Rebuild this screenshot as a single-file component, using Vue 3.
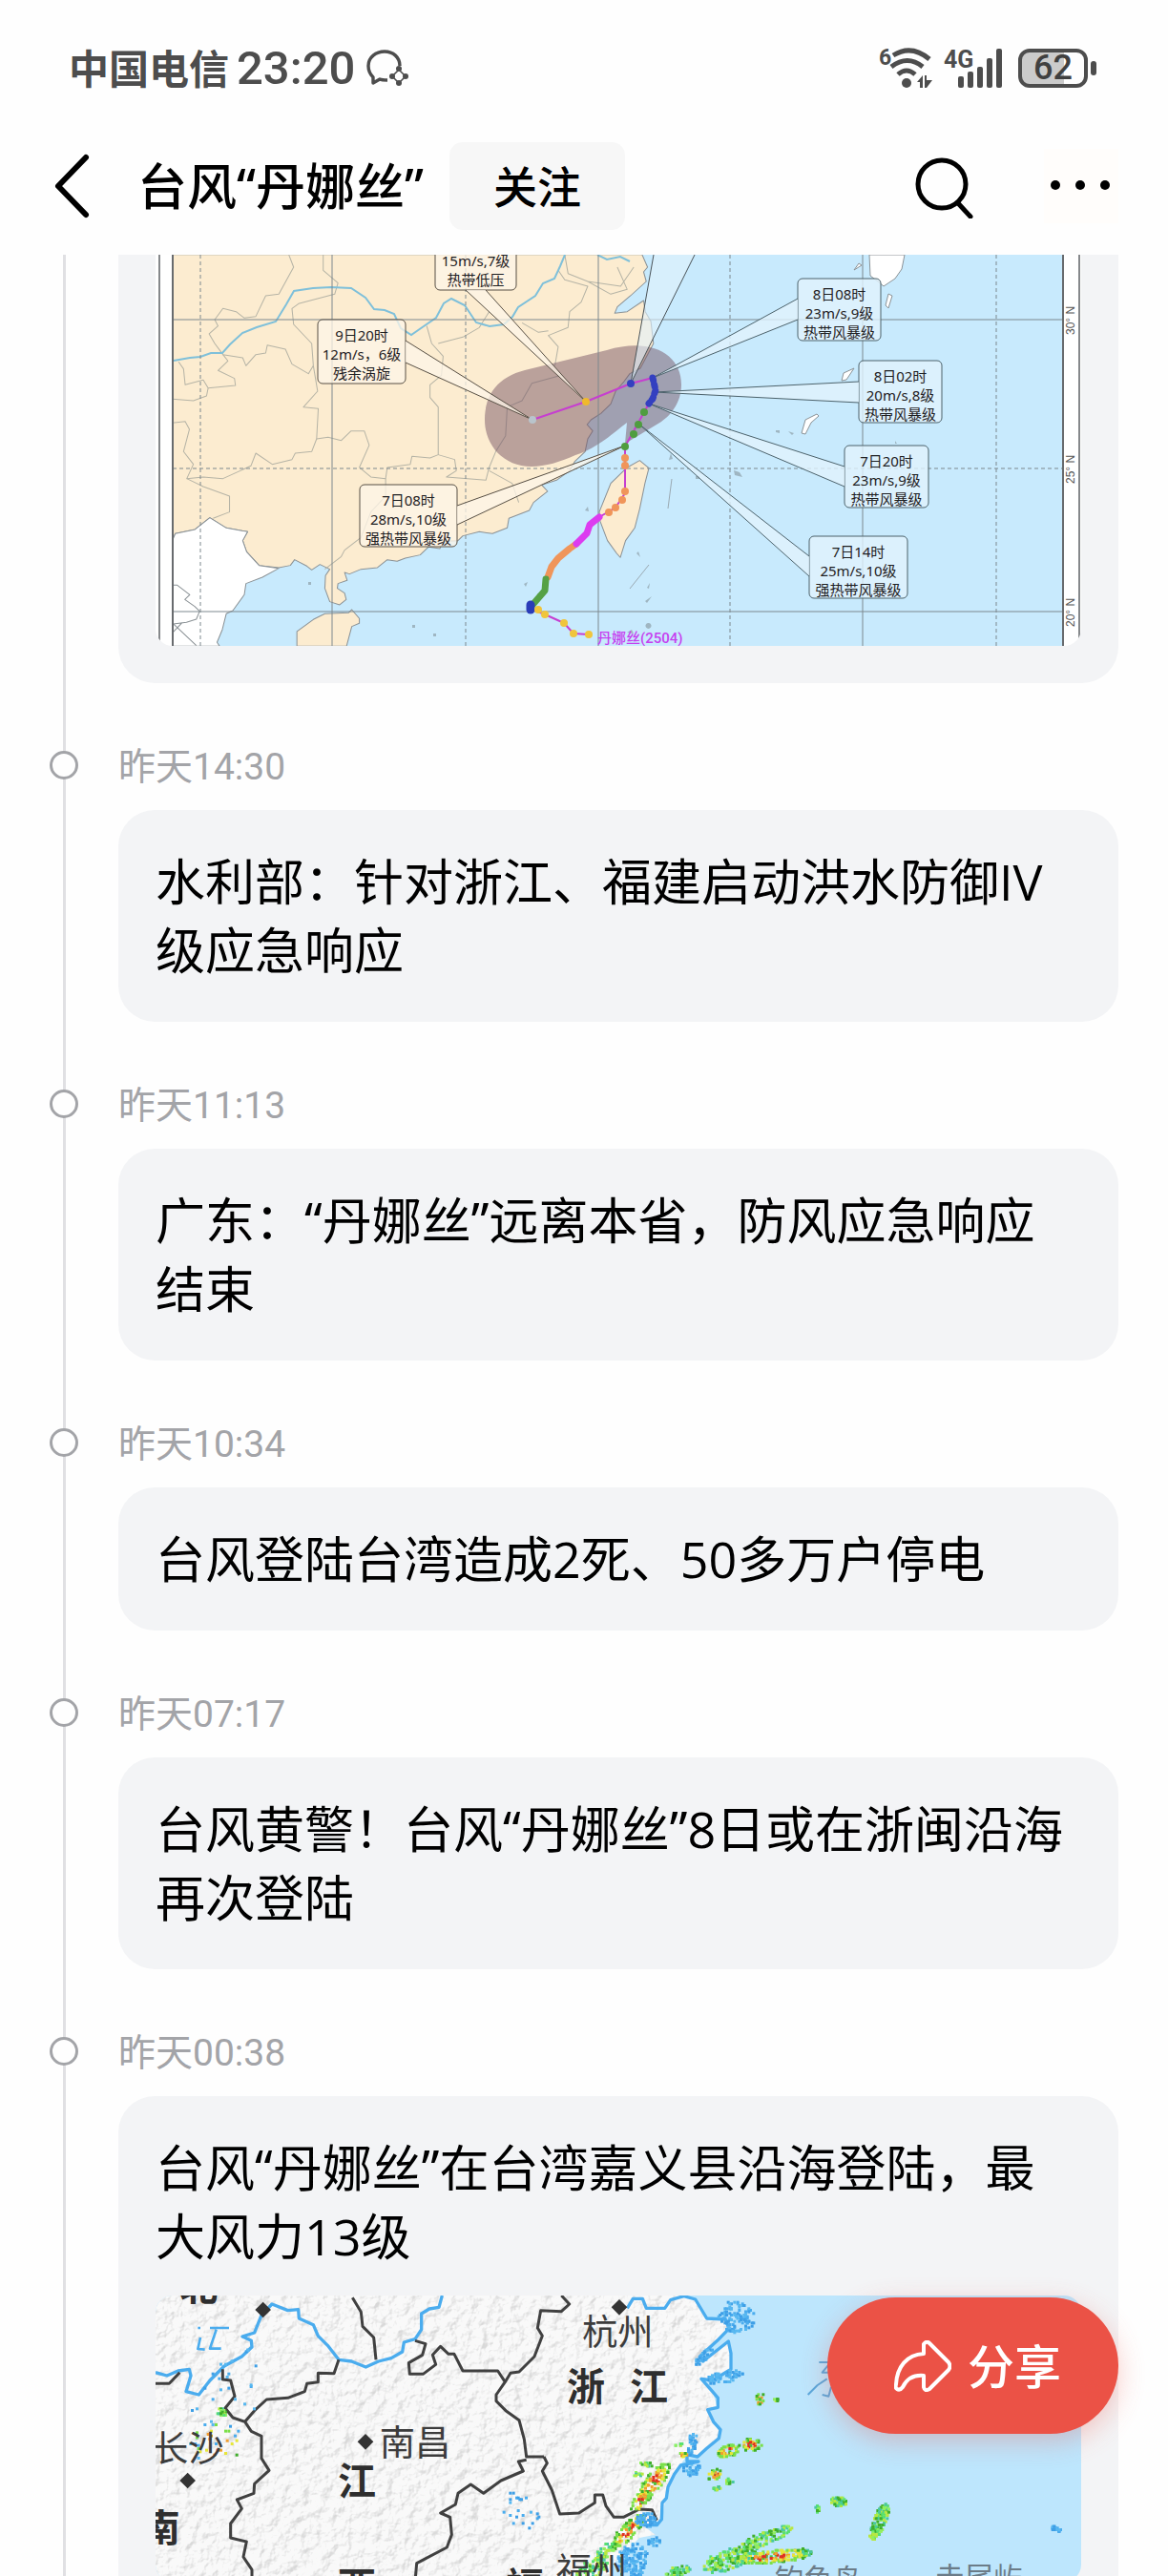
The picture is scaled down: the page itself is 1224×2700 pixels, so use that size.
<script setup>
import { ref } from 'vue'

const followed = ref(false)

const entries = [
  { time: '昨天14:30', title: '水利部：针对浙江、福建启动洪水防御IV级应急响应' },
  { time: '昨天11:13', title: '广东：“丹娜丝”远离本省，防风应急响应结束' },
  { time: '昨天10:34', title: '台风登陆台湾造成2死、50多万户停电' },
  { time: '昨天07:17', title: '台风黄警！台风“丹娜丝”8日或在浙闽沿海再次登陆' },
  {
    time: '昨天00:38',
    title: '台风“丹娜丝”在台湾嘉义县沿海登陆，最大风力13级',
    radar: true,
  },
]

// curly quotes are set in their own face
const splitQuotes = (text) => {
  return text.split(/([“”])/).filter(Boolean)
}

const isQuote = (part) => {
  return part === '“' || part === '”'
}

// forecast bubbles on the track map
const callouts = [
  { x: 293, y: -30, w: 85, h: 67, lines: ['', '15m/s,7级', '热带低压'], leader: '325,37 451,154 346,37', land: true },
  { x: 170, y: 68, w: 92, h: 67, lines: ['9日20时', '12m/s，6级', '残余涡旋'], leader: '262,90 395,173 262,113', land: true },
  { x: 214, y: 241, w: 102, h: 65, lines: ['7日08时', '28m/s,10级', '强热带风暴级'], leader: '316,263 492,200 316,283', land: true },
  { x: 673, y: 25, w: 87, h: 65, lines: ['8日08时', '23m/s,9级', '热带风暴级'], leader: '673,46 521,129 673,68' },
  { x: 737, y: 111, w: 87, h: 65, lines: ['8日02时', '20m/s,8级', '热带风暴级'], leader: '737,133 523,144 737,155' },
  { x: 722, y: 200, w: 88, h: 65, lines: ['7日20时', '23m/s,9级', '热带风暴级'], leader: '722,222 517,156 722,243' },
  { x: 685, y: 295, w: 103, h: 65, lines: ['7日14时', '25m/s,10级', '强热带风暴级'], leader: '685,316 506,177 685,337' },
]

const trackDots = [
  { x: 395, y: 173, c: '#b9c4cc' },
  { x: 451, y: 154, c: '#efb92c' },
  { x: 498, y: 135, c: '#3340c0' },
  { x: 512, y: 165, c: '#4f9d3f' },
  { x: 506, y: 178, c: '#4f9d3f' },
  { x: 501, y: 188, c: '#4f9d3f' },
  { x: 492, y: 201, c: '#4f9d3f' },
  { x: 492, y: 213, c: '#f0955a' },
  { x: 492, y: 221, c: '#f0955a' },
  { x: 492, y: 248, c: '#f0955a' },
  { x: 489, y: 257, c: '#f0955a' },
  { x: 482, y: 265, c: '#f0955a' },
  { x: 475, y: 270, c: '#f0955a' },
  { x: 401, y: 372, c: '#f0c53c' },
  { x: 408, y: 377, c: '#f0c53c' },
  { x: 428, y: 386, c: '#f0c53c' },
  { x: 438, y: 397, c: '#f0c53c' },
  { x: 454, y: 398, c: '#f0c53c' },
]

// radar echoes: centre, half length, half width, angle, density, palette
const hot = ['#3fae2a', '#7be04a', '#e6e63a', '#f0a030', '#e03020', '#48c840']
const green = ['#58e070', '#3fae2a', '#8ff060', '#b8e840', '#48c8a0']
const blue = ['#4aacee', '#58b8f0', '#3e9fe6']
const echoes = [
  [1692, 660, 75, 26, -52, 110, hot],
  [1650, 720, 40, 20, -50, 40, hot],
  [1610, 815, 75, 22, -48, 90, hot],
  [1540, 880, 45, 18, -48, 40, green],
  [1495, 935, 55, 26, -30, 90, green],
  [1925, 562, 34, 20, -20, 50, hot],
  [1995, 543, 36, 18, 0, 40, hot],
  [1885, 637, 24, 16, -20, 26, hot],
  [1925, 660, 14, 8, 0, 12, green],
  [1890, 678, 12, 8, 0, 10, green],
  [2025, 400, 14, 16, 0, 14, hot],
  [2077, 403, 8, 6, 0, 6, green],
  [2035, 840, 100, 20, -22, 120, green],
  [2060, 895, 130, 20, -5, 170, hot],
  [1925, 905, 85, 32, -18, 150, green],
  [1765, 945, 50, 18, -20, 60, green],
  [2400, 785, 60, 20, -68, 130, green],
  [2272, 722, 24, 16, 0, 40, green],
  [2207, 745, 9, 12, 0, 12, green],
  [2172, 880, 18, 10, 30, 12, green],
  [2957, 808, 16, 9, 20, 20, blue],
  [1640, 635, 16, 8, 0, 10, green],
  [1668, 605, 22, 8, 0, 12, green],
  [1770, 543, 12, 5, 0, 6, green],
  [1785, 576, 16, 8, 0, 12, hot],
  [1950, 140, 60, 50, 20, 110, blue],
  [1910, 330, 60, 18, -10, 60, blue],
  [1850, 262, 40, 12, -45, 26, blue],
  [1812, 540, 14, 34, 15, 34, blue],
  [1810, 620, 28, 20, 0, 34, blue],
  [1625, 910, 50, 55, 20, 130, blue],
  [1670, 780, 36, 22, 0, 54, blue],
  [1690, 850, 22, 16, 0, 20, blue],
  [345, 410, 200, 90, -60, 34, blue],
  [315, 540, 80, 60, 0, 20, hot],
  [335, 440, 14, 12, 0, 16, green],
  [1275, 745, 70, 60, 30, 22, blue],
]

const makeCells = () => {
  let seed = 7
  const rand = () => {
    seed = (seed * 16807) % 2147483647
    return seed / 2147483647
  }
  const cells = []

  echoes.forEach(([cx, cy, rx, ry, angle, count, palette]) => {
    const a = (angle * Math.PI) / 180
    for (let i = 0; i < count; i++) {
      const r = Math.sqrt(rand())
      const t = rand() * Math.PI * 2
      const u = Math.cos(t) * r * rx
      const v = Math.sin(t) * r * ry
      const pick = palette === hot
        ? Math.min(5, Math.floor((1 - r) * 5 + rand() * 1.5))
        : Math.floor(rand() * palette.length)
      cells.push({
        x: Math.round((cx + u * Math.cos(a) - v * Math.sin(a)) / 5) * 5,
        y: Math.round((cy + u * Math.sin(a) + v * Math.cos(a)) / 5) * 5,
        c: palette[pick],
      })
    }
  })

  return cells
}

const cells = makeCells()
</script>

<template>
  <div class="page">
    <header class="status">
      <span class="carrier">中国电信</span>
      <span class="clock">23:20</span>
      <svg class="chat" viewBox="0 0 44 38" aria-hidden="true">
        <g fill="none" stroke="#4d4d4d" stroke-width="3.4" stroke-linejoin="round">
          <path d="M35 17C35 8 28 2 19 2S2 8 2 17c0 5 2 9 5 12v6l7-4c2 1 6 1 8 1" />
          <path d="M34 21l7 7-7 7-7-7z" stroke-width="1.6" />
        </g>
        <g fill="#4d4d4d">
          <circle cx="34" cy="20" r="3" />
          <circle cx="41" cy="28" r="3" />
          <circle cx="34" cy="35" r="3" />
          <circle cx="27" cy="28" r="3" />
        </g>
      </svg>

      <div class="signals">
        <svg class="wifi" viewBox="0 0 58 44" aria-hidden="true">
          <text x="0" y="19" font-size="23" class="tiny">6</text>
          <g fill="none" stroke="#4d4d4d" stroke-width="5">
            <path d="M15 9Q34-3 53 13" />
            <path d="M13 21Q30 8 46 21" />
            <path d="M20 29Q29 21 38 29" />
          </g>
          <circle cx="29" cy="38" r="5" fill="#4d4d4d" />
          <path d="M40 37l6-7v13h-3v-6zM48 30h2v5h6l-6 8h-2z" fill="#4d4d4d" />
        </svg>
        <svg class="cell" viewBox="0 0 62 44" aria-hidden="true">
          <text x="0" y="22" font-size="25" class="tiny">4G</text>
          <g fill="#4d4d4d">
            <rect x="15" y="31" width="6" height="12" rx="2" />
            <rect x="25" y="26" width="6" height="17" rx="2" />
            <rect x="35" y="21" width="6" height="22" rx="2" />
            <rect x="45" y="12" width="6" height="31" rx="2" />
            <rect x="55" y="2" width="6" height="41" rx="2" />
          </g>
        </svg>
        <span class="battery"><b>62</b></span>
      </div>
    </header>

    <nav class="nav">
      <button type="button" class="back" aria-label="返回">
        <svg viewBox="0 0 48 72">
          <path d="M38 6L9 36l29 30" fill="none" stroke="#000" stroke-width="6" stroke-linecap="round" stroke-linejoin="round" />
        </svg>
      </button>
      <h1>台风<span class="quote">“</span>丹娜丝<span class="quote">”</span></h1>
      <button type="button" class="follow" @click="followed = !followed">
        {{ followed ? '已关注' : '关注' }}
      </button>
      <button type="button" class="search" aria-label="搜索">
        <svg viewBox="0 0 64 68">
          <g fill="none" stroke="#000" stroke-width="5" stroke-linecap="round">
            <circle cx="31" cy="32" r="25" />
            <path d="M48 52l13 14" />
          </g>
        </svg>
      </button>
      <button type="button" class="more" aria-label="更多">
        <svg viewBox="0 0 78 78">
          <circle cx="12" cy="38" r="5" />
          <circle cx="38" cy="38" r="5" />
          <circle cx="64" cy="38" r="5" />
        </svg>
      </button>
    </nav>

    <main class="feed">
      <section class="entry is-first">
        <div class="card">
          <svg class="map" viewBox="0 0 970 410" role="img" aria-label="台风路径图">
            <rect width="970" height="410" fill="#fff" />
            <rect x="18" width="933" height="410" fill="#c8eafd" />

            <!-- coastline, drawn on a finer sheet -->
            <g transform="translate(-43 -7) scale(.3444 .3333)" stroke="#8b9296" stroke-width="3" stroke-linejoin="round">
              <path
                fill="#fcecd0"
                d="M176 20H1605L1622 60L1610 75L1618 105L1570 150L1530 185L1522 205L1560 200L1610 165L1615 200L1632 230L1640 300L1600 378L1568 395L1550 420L1525 450L1510 490L1480 520L1450 540L1438 555L1455 575L1440 600L1432 640L1400 672L1385 700L1345 730L1300 745L1318 765L1275 800L1262 825L1200 850L1195 880L1150 898L1110 892L1060 905L1045 920L1000 922L990 945L955 940L930 965L885 975L860 985L830 980L800 1005L750 1010L715 1025L700 1020L708 1045L680 1055L678 1070L700 1085L705 1105L685 1122L655 1112L640 1070L642 1030L655 1010L625 995L600 1012L585 1000L548 980L535 998L500 1005L440 998L402 955L390 920L405 892L340 880L290 848L245 885L185 898L176 920Z"
              />
              <path
                fill="#fff"
                d="M176 920L185 898L245 885L290 848L340 880L405 892L390 920L402 955L440 998L500 1007L450 1035L400 1055L395 1090L360 1140L340 1150L328 1200L312 1240L320 1252H176Z"
              />
              <path fill="#fcecd0" d="M555 1252V1206L605 1168L640 1150L712 1147L722 1137L745 1165L745 1180L722 1190L706 1252Z" />
              <path fill="#fcecd0" d="M1598 668L1626 692L1614 740L1598 820L1583 880L1555 920L1539 973L1528 960L1500 920L1478 860L1475 830L1510 740L1560 690Z" />
              <path fill="none" d="M176 1060l15 0 38 30-15 15 30 22 15 15-10 25-30 10-40 5 70 68M176 1210l30-32" />
            </g>
            <g transform="translate(-43 -7) scale(.3444 .3333)" fill="none" stroke="#b6b4a6" stroke-width="3" stroke-linejoin="round">
              <path d="M530 20L545 60L500 145L460 150L430 215L395 220L370 200L330 190L305 225L315 245L288 270L305 300L330 335L390 345L400 370L430 335L460 330L465 305L520 318L540 365L590 395L605 370L600 300L545 240L540 190L560 175L670 145L680 110L635 70L635 20" />
              <path d="M330 335L345 355L315 385L365 410L368 432L285 440L280 465L240 480L176 475M285 440L270 415L215 430L210 380L195 358" />
              <path d="M605 370L618 450L575 500L620 505L615 600L600 640L550 645L540 665L480 680L430 645L415 685L330 725L270 720L220 725L240 680L210 640L228 570L215 545L176 550" />
              <path d="M950 245L965 300L1000 340L995 400L960 430L960 470L985 500L985 650L960 660L905 655L900 680L830 690L825 725L780 720L745 690L775 620L760 575L720 575L690 605L650 595L615 600" />
              <path d="M985 650L1035 665L1040 700L1010 720L1130 730L1140 690L1160 640L1190 590L1195 500L1240 480L1270 425L1360 400M1340 370L1350 310L1320 275L1380 250L1385 200L1420 170L1440 120L1370 100L1350 70" />
              <path d="M220 725L270 750L350 780L350 830L300 850M825 725L825 780L780 830L750 910L700 950L690 970L640 1010M1140 700L1210 740L1230 800" />
              <path d="M985 300L1060 280L1110 250L1140 200M1370 20L1380 80L1440 105L1510 145L1560 130L1530 60M1240 235L1290 265L1320 260M1440 105L1540 120L1580 60" />
            </g>
            <path
              fill="none"
              stroke="#7fc0da"
              stroke-width="2"
              d="M19 111L36 108L47 107L58 103L70 103L78 94L91 82L106 76L126 70L137 52L145 38L165 35L184 34L205 35L220 45L229 57L240 58L250 62L257 77L268 84L281 75L294 66L302 51L310 46L324 53L336 71L350 75L365 73L374 65L380 55L398 43L406 30L418 25L424 12L429 0M463 0l10 5 14-3 10 5"
            />

            <g fill="#fff" stroke="#8b9296">
              <path d="M748 0L749 22L757 28L763 33L775 25L782 15L785 0Z" />
              <path d="M719 132l2-8 11-5-8 12zM677 187l4-14 12-6 2 2-8 7-6 12zM765 53l3-12 4 2-4 13zM732 16l5-7 3 2z" />
            </g>
            <path
              fill="#9fb6c2"
              d="M566 232h4v3h-4zM606 226l6 2 3 5-8-2zM504 313l4 4-2-6zM513 363l7-5-5 7zM650 184l4 0 0 3-4-1zM663 185l6 2-2 2zM775 195l2 3-2 0zM386 345l4-2-2 5zM400 355l5 0-3 5zM160 343h3v3h-3zM269 388h3v3h-3zM291 397h3v3h-3zM516 386a3 3 0 1 0 1 0zM494 396l5-3 2 4zM538 215l2-7 2 6zM515 349l3-5-1 6zM450 268l3-4 1 5z"
            />
            <path d="M541 235l-4 31M517 325l-20 25" stroke="#9aa9b2" fill="none" />

            <path
              fill="rgba(119, 85, 102, 0.5)"
              d="M345 173C345 145 360 128 387 121L473 100C520 86 551 105 551 136C551 155 540 168 530 175L492 198L494 176C480 186 465 202 440 210C425 217 408 222 394 222C365 222 345 200 345 173Z"
            />

            <g fill="none" stroke="#7d888e">
              <path d="M185 0V410M464 0V410M741 0V410M18 68H951M18 374H951" />
              <path d="M47 0V410M325 0V410M602 0V410M881 0V410M18 224H951" stroke-dasharray="4 3" />
              <path d="M18 0V410M951 0V410" stroke="#686b6e" stroke-width="2" />
              <path d="M4 0V410M968 0V410" stroke="#85888b" stroke-width="2" />
            </g>

            <path d="M522 0L498 135L565 0" fill="rgba(225, 242, 252, 0.6)" stroke="#4a5358" />

            <g v-for="c in callouts" :key="c.leader" :class="c.land ? 'on-land' : 'on-sea'">
              <rect :x="c.x" :y="c.y" :width="c.w" :height="c.h" rx="5" />
              <polyline :points="c.leader" />
            </g>

            <g fill="none" stroke-linejoin="round" stroke-linecap="round">
              <path d="M395 173L451 154L498 135L521 129L523 144L517 156L492 201V250L482 265L465 275M393 371L408 377L428 386L438 397L454 398" stroke="#c63fd0" stroke-width="2" />
              <path d="M521 129L524 142L521 151L517 156" stroke="#3340c0" stroke-width="7" stroke-dasharray="3 4" />
              <path d="M521 129L524 142L521 151L517 156" stroke="#3340c0" stroke-width="4" />
              <path d="M441 303L434 308L422 318L415 327L411 338" stroke="#f0955a" stroke-width="7" />
              <path d="M465 275L455 283L452 292L441 303" stroke="#dc3cf0" stroke-width="7" />
              <path d="M409 340L408 352L395 367" stroke="#55a145" stroke-width="7" />
              <path d="M393 367V372" stroke="#2a3cb8" stroke-width="9" />
            </g>
            <circle v-for="d in trackDots" :key="`${d.x}-${d.y}`" :cx="d.x" :cy="d.y" r="4" :fill="d.c" />

            <g class="callout-text">
              <template v-for="c in callouts" :key="c.leader">
                <text v-for="(line, i) in c.lines" :key="i" :x="c.x + c.w / 2" :y="c.y + 22 + i * 20">{{ line }}</text>
              </template>
            </g>
            <text x="463" y="407" font-size="15" class="storm-name">丹娜丝(2504)</text>
            <g class="latitudes">
              <text transform="translate(963 84) rotate(-90)">30° N</text>
              <text transform="translate(963 240) rotate(-90)">25° N</text>
              <text transform="translate(963 390) rotate(-90)">20° N</text>
            </g>
          </svg>
        </div>
      </section>

      <section v-for="entry in entries" :key="entry.time" class="entry">
        <time>{{ entry.time }}</time>
        <article class="card">
          <p>
            <span
              v-for="(part, i) in splitQuotes(entry.title)"
              :key="i"
              :class="{ quote: isQuote(part) }"
            >{{ part }}</span>
          </p>

          <svg v-if="entry.radar" class="map is-radar" viewBox="129 78 2910 900" role="img" aria-label="雷达回波图">
            <defs>
              <filter id="relief" x="0" y="0" width="100%" height="100%">
                <feTurbulence type="fractalNoise" baseFrequency="0.03" numOctaves="4" seed="4" />
                <feDiffuseLighting surfaceScale="18" diffuseConstant="1.3" lighting-color="#fff" result="light">
                  <feDistantLight azimuth="225" elevation="52" />
                </feDiffuseLighting>
                <feColorMatrix in="light" type="matrix" values=".26 0 0 0 .69 0 .26 0 0 .69 0 0 .26 0 .69 0 0 0 1 0" />
                <feComposite in2="SourceGraphic" operator="in" />
              </filter>
            </defs>
            <rect x="129" y="78" width="2910" height="900" fill="#bde6fd" />
            <path
              filter="url(#relief)"
              fill="#f3f3f3"
              d="M129 78H1800L1830 95L1860 150L1920 155L1930 180L1890 230L1840 275L1850 285L1930 225L1940 260V310L1880 345L1850 335L1880 380L1895 430L1865 435L1880 480L1905 500L1895 525L1860 560L1830 585L1800 580L1780 610L1760 640L1740 680L1730 730L1720 790L1660 800L1700 830L1650 840L1620 870L1560 930V978H129Z"
            />
            <g fill="none" stroke="#4aacee" stroke-width="10" stroke-linejoin="round">
              <path d="M1612 118L1630 88L1660 88L1672 118H1730L1748 92L1790 80L1826 90L1862 150L1920 153L1932 182L1895 220L1840 270L1850 285L1930 222L1938 260V310L1880 345L1845 340L1880 380L1897 400V430L1865 437L1883 475L1905 500L1900 527L1860 560L1833 585L1800 578V600H1836L1780 612L1760 640L1740 680L1735 715L1722 730L1720 782L1705 800L1660 800" />
              <path d="M129 320L165 330L200 315L235 310L240 330L225 380L265 390L300 345L345 300L400 270L432 240L430 220L402 207L440 195L462 140L495 105L545 125L578 122L580 150L625 170L640 205L670 235L705 280L745 285L790 303L830 285L870 275L905 255L910 225L945 215L965 185L965 135L990 120L1020 115L1030 78" />
              <path d="M262 180h8M300 180h60M320 185l-20 60h35M270 210l-8 36 22 2" stroke-width="8" />
              <path d="M2215 288h30M2245 320l-20 0 25-30M2180 390l30-30 30-20M2225 390l20 5 8-30" stroke="#5aa8dc" stroke-width="6" />
            </g>
            <g fill="none" stroke="#404040" stroke-width="9" stroke-linejoin="round">
              <path d="M129 355H172L205 320M340 310V342L365 345L378 395L348 432L372 462L410 475L430 505L462 520V590L486 628L440 670L438 700L385 720L400 748L365 795V840L415 852L405 900L432 940V978" />
              <path d="M410 475L440 440L478 405L545 400L598 380L605 355L640 350V322L690 323L705 280M748 85L775 130L780 175L815 210L822 280" />
              <path d="M945 220L978 230L968 265L925 290L928 325L970 325L1010 295L1000 265L1025 238L1050 262L1068 262L1095 315H1205L1228 350L1200 390V410L1230 440L1272 470L1288 530L1295 585H1350M1228 350L1245 322L1272 318L1320 270L1345 205L1330 180L1340 125L1405 128L1430 105L1405 78" />
              <path d="M1295 595L1270 600L1285 630L1215 660L1160 700L1120 672L1080 700L1072 735L1025 762L1055 775L1060 830L1045 870L950 920L945 978M1350 585L1360 605L1345 630L1375 690L1400 765L1460 762L1510 730V705H1535L1545 740L1570 775L1600 775L1650 750L1690 752L1705 785" />
            </g>
            <rect v-for="(cell, i) in cells" :key="i" :x="cell.x" :y="cell.y" width="9" height="9" :fill="cell.c" />
            <g fill="#333">
              <path d="M467 98l25 25-25 25-25-25zM789 513l25 25-25 25-25-25zM230 635l25 25-25 25-25-25zM1587 90l25 25-25 25-25-25z" />
            </g>
            <g class="cities">
              <text x="120" y="600">长沙</text>
              <text x="833" y="582">南昌</text>
              <text x="1470" y="234">杭州</text>
              <text x="1388" y="984">福州</text>
              <text x="2075" y="1004" class="isle">钓鱼岛</text>
              <text x="2580" y="998" class="isle">赤尾屿</text>
            </g>
            <g class="provinces">
              <text x="205" y="92">北</text>
              <text x="86" y="852">南</text>
              <text x="702" y="706">江</text>
              <text x="702" y="1034">西</text>
              <text x="1422" y="408">浙</text>
              <text x="1620" y="408">江</text>
              <text x="1230" y="1034">福</text>
            </g>
          </svg>
        </article>
      </section>
    </main>

    <button type="button" class="share">
      <svg viewBox="0 0 60 54" aria-hidden="true">
        <path
          d="M31 4Q34 0 37 3L57 23Q60 27 57 31L37 51Q32 54 31 49V37C20 36 13 41 9 49Q6 53 3 51Q1 50 2 46C3 28 13 15 31 14Z"
          fill="none"
          stroke="#fff"
          stroke-width="4"
          stroke-linejoin="round"
        />
      </svg>
      <span>分享</span>
    </button>
  </div>
</template>

<style>
body {
  margin: 0;
  background: #fefefe;
}
</style>

<style scoped>
.page {
  display: flex;
  flex-direction: column;
  height: 100vh;
  overflow: hidden;
  background: #fefefe;
  color: #000;
  font-family: Roboto, "Noto Sans CJK SC", sans-serif;
}

button {
  padding: 0;
  border: 0;
  background: none;
  color: inherit;
  font-family: inherit;
  cursor: pointer;
}

svg {
  display: block;
}

.status {
  display: flex;
  flex: none;
  align-items: center;
  height: 142px;
  padding: 0 75px 0 72px;
  color: #4d4d4d;
  font-weight: 500;
}

.carrier {
  padding-bottom: 4px;
  font-size: 42px;
  font-weight: 700;
}

.clock {
  margin: 0 12px 0 8px;
  font-size: 49px;
}

.chat {
  width: 44px;
  height: 38px;
}

.signals {
  display: flex;
  gap: 10px;
  align-items: center;
  margin-left: auto;
}

.signals svg {
  overflow: visible;
}

.wifi {
  width: 58px;
  height: 44px;
}

.cell {
  width: 62px;
  height: 44px;
}

.tiny {
  fill: #4d4d4d;
  font-weight: 700;
}

.battery {
  position: relative;
  display: grid;
  box-sizing: border-box;
  width: 73px;
  height: 41px;
  margin: 0 9px 0 6px;
  place-items: center;
  border: 4px solid #4d4d4d;
  border-radius: 12px;
  background: linear-gradient(to right, #cbcbcb 68%, transparent 68%);
}

.battery::after {
  position: absolute;
  right: -13px;
  width: 6px;
  height: 15px;
  border-radius: 3px;
  background: #4d4d4d;
  content: "";
}

.battery b {
  color: #404040;
  font-size: 36px;
  font-weight: 500;
  line-height: 33px;
}

.nav {
  display: flex;
  flex: none;
  align-items: center;
  height: 106px;
  padding: 0 52px 19px;
}

.back {
  width: 92px;
}

.back svg {
  width: 48px;
  height: 72px;
}

h1,
.card p {
  margin: 0;
  font-family: "Open Sans", "Noto Sans CJK SC", sans-serif;
  font-size: 52px;
  line-height: 72px;
}

h1 {
  font-weight: 500;
}

.quote {
  font-family: "Noto Sans", sans-serif;
}

.follow {
  height: 92px;
  margin-left: 27px;
  padding: 0 46px 4px;
  border-radius: 14px;
  background: #f7f7f7;
  font-size: 46px;
  font-weight: 500;
}

.search {
  margin-left: auto;
}

.search svg {
  width: 64px;
  height: 68px;
}

.more {
  margin-left: 74px;
  background: #fffdfb;
}

.more svg {
  width: 78px;
  height: 78px;
}

.feed {
  flex: 1;
  min-height: 0;
  overflow: hidden;
}

.entry {
  position: relative;
  padding: 58px 52px 0 124px;
}

/* rail and its knob */
.entry::before {
  position: absolute;
  top: 0;
  bottom: 0;
  left: 66px;
  width: 3px;
  background: #e0e0e3;
  content: "";
}

.entry time {
  display: block;
  padding-top: 2px;
  margin-bottom: 17px;
  color: #a3a4a8;
  font-size: 39px;
  line-height: 56px;
}

.entry time::before {
  position: absolute;
  top: 71px;
  left: 52px;
  box-sizing: border-box;
  width: 30px;
  height: 30px;
  border: 3px solid #a3a4a8;
  border-radius: 50%;
  background: #fefefe;
  content: "";
}

.card {
  padding: 39px;
  border-radius: 38px;
  background: #f3f4f6;
}

.is-first {
  padding-top: 0;
}

.is-first .card {
  padding-top: 0;
  border-radius: 0 0 38px 38px;
}

.map {
  width: 100%;
  height: auto;
  border-radius: 0 0 18px 18px;
}

.map.is-radar {
  margin-top: 26px;
  border-radius: 18px;
}

.on-land rect,
.on-land polyline {
  fill: rgba(253, 245, 232, 0.75);
  stroke: #574f44;
}

.on-sea rect,
.on-sea polyline {
  fill: rgba(225, 242, 252, 0.8);
  stroke: #4c626b;
}

.callout-text {
  fill: #1e2022;
  font-family: "Noto Sans", "Noto Sans CJK SC", sans-serif;
  font-size: 15px;
  text-anchor: middle;
}

.storm-name {
  fill: #c63ff0;
  font-weight: 500;
}

.latitudes {
  fill: #555;
  font-family: "Liberation Sans", sans-serif;
  font-size: 12px;
}

.cities {
  fill: #3c3c3c;
  font-size: 112px;
  font-weight: 400;
}

.cities .isle {
  fill: #6b7c88;
  font-size: 92px;
}

.provinces {
  fill: #2e2e2e;
  font-size: 120px;
  font-weight: 700;
}

.share {
  position: fixed;
  right: 52px;
  bottom: 149px;
  display: flex;
  gap: 17px;
  align-items: center;
  height: 143px;
  padding: 0 60px 0 70px;
  border-radius: 72px;
  background: #eb5246;
  box-shadow: 0 8px 28px rgba(235, 82, 70, 0.3);
  color: #fff;
  font-size: 49px;
  font-weight: 500;
}

.share svg {
  width: 60px;
  height: 54px;
}

.share span {
  padding-bottom: 4px;
}
</style>
